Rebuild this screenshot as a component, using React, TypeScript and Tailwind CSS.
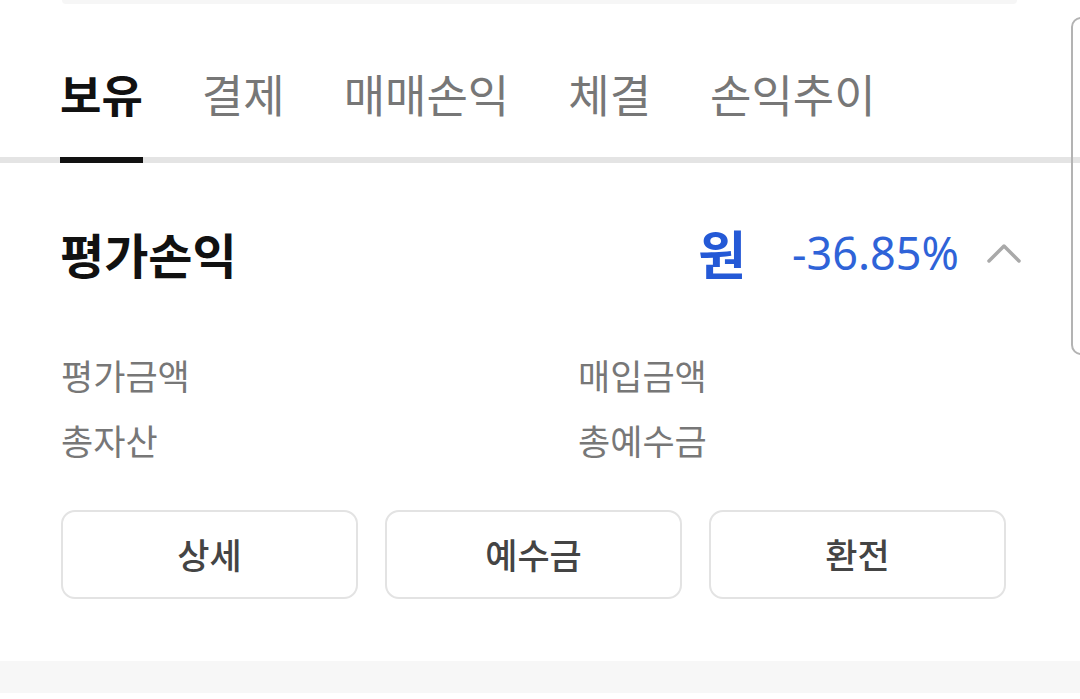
import React from "react";

const tabs = ["보유", "결제", "매매손익", "체결", "손익추이"];

export default function App() {
  return (
    <div
      className="relative w-[1080px] h-[699px] overflow-hidden bg-white"
      style={{ fontFamily: '"Noto Sans CJK KR", "Noto Sans", sans-serif' }}
    >
      {/* top card remnant */}
      <div className="ml-[62px] w-[955px] h-[4px] bg-[#f6f6f6] rounded-b-[10px]" />

      {/* tabs */}
      <div className="flex items-start gap-[59px] pl-[60px] border-b-[6px] border-[#e4e4e4]">
        {tabs.map((t, i) => (
          <div
            key={t}
            className={
              i === 0
                ? "h-[159px] -mb-[6px] border-b-[6px] border-[#111111] pt-[57px] text-[45px] leading-[65px] font-bold text-[#111111] whitespace-nowrap"
                : "h-[153px] pt-[57px] text-[45px] leading-[65px] text-[#777777] whitespace-nowrap"
            }
          >
            {t}
          </div>
        ))}
      </div>

      {/* title row */}
      <div className="mt-[42px] h-[96px] flex items-center justify-between pl-[60px] pr-[59px]">
        <div className="text-[48px] font-bold text-[#111111]">평가손익</div>
        <div className="flex items-center">
          <span className="text-[52px] font-bold text-[#2459d6]">원</span>
          <span
            className="ml-[46px] text-[45px] text-[#2f63d8]"
            style={{ fontFamily: '"Noto Sans", sans-serif' }}
          >
            -36.85%
          </span>
          <svg className="ml-[28px]" width="34" height="22" viewBox="0 0 34 22">
            <polyline
              points="2,19 17,4 32,19"
              fill="none"
              stroke="#a9a9a9"
              strokeWidth="3.5"
              strokeLinecap="round"
              strokeLinejoin="round"
            />
          </svg>
        </div>
      </div>

      {/* labels */}
      <div className="mt-[41px] grid grid-cols-2 gap-x-[76px] px-[61px] text-[35px] leading-[65px] text-[#777777]">
        <div>평가금액</div>
        <div>매입금액</div>
        <div>총자산</div>
        <div>총예수금</div>
      </div>

      {/* buttons */}
      <div className="mt-[38px] ml-[61px] w-[945px] grid grid-cols-3 gap-[27px]">
        {["상세", "예수금", "환전"].map((b) => (
          <div
            key={b}
            className="h-[89px] flex items-center justify-center rounded-[14px] border-2 border-[#e3e3e3] text-[35px] font-medium text-[#444444]"
          >
            {b}
          </div>
        ))}
      </div>

      {/* bottom gray strip */}
      <div className="mt-[62px] h-[32px] bg-[#f7f7f7]" />

      {/* right edge scroll overlay */}
      <div className="absolute left-[1071px] top-[17px] w-[24px] h-[338px] rounded-[10px] border-2 border-[#b3b3b3]" />
    </div>
  );
}
